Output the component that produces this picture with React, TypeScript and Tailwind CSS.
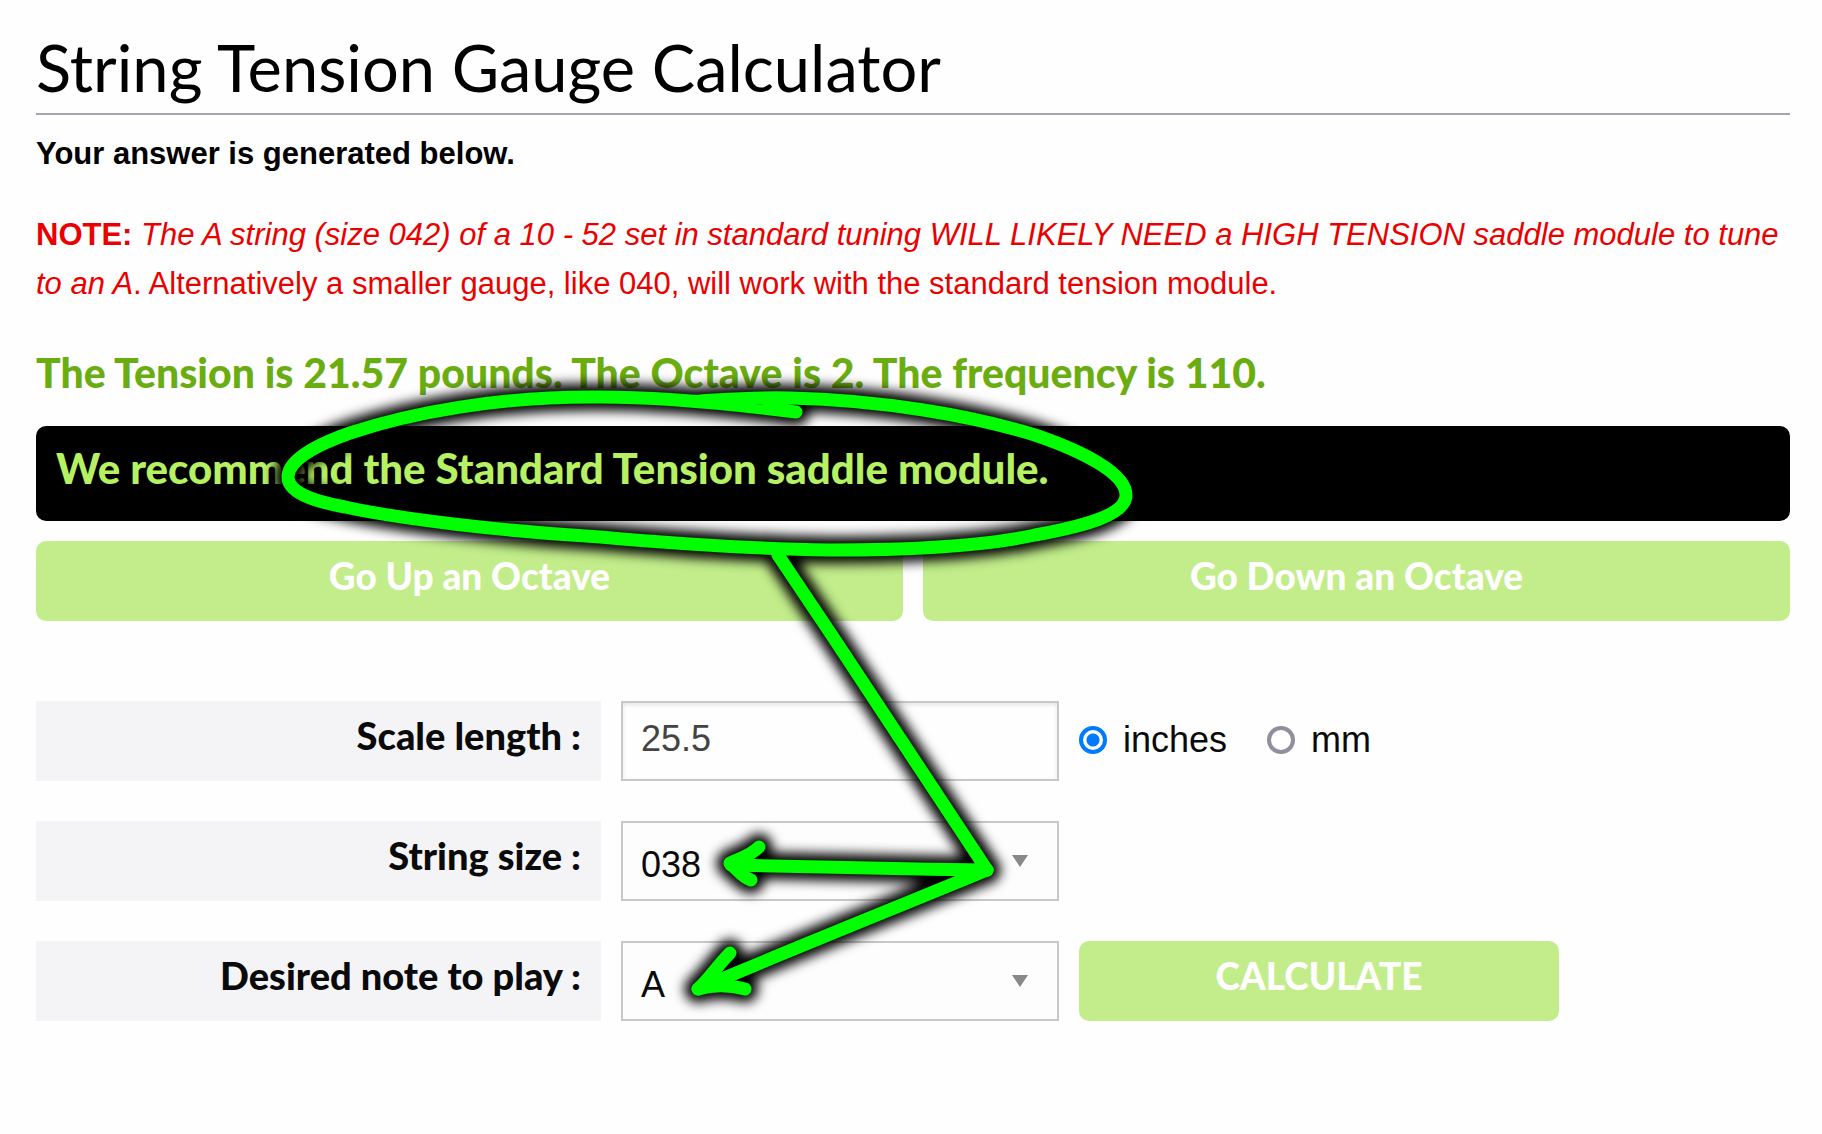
import { useState } from "react";
import type { ReactNode } from "react";

const strokes = [
  "M796 412 C740 405 670 397 600 397 C500 396 410 413 350 433 C310 447 288 462 288 477 C288 492 312 501 345 507 C400 519 500 531 600 537 C680 544 760 549 830 550 C900 550 980 547 1035 535 C1085 526 1126 515 1126 495 C1126 474 1085 452 1035 435 C970 415 880 400 790 398 C750 397 720 400 700 401",
  "M778 555 L835 640 L987 870",
  "M987 870 C900 869 810 867 731 865",
  "M759 847 C750 856 740 858 730 863 C737 869 742 877 751 880",
  "M987 870 C890 910 790 950 698 989",
  "M730 953 C718 965 709 979 698 989 C715 984 730 985 745 989",
];

function Annotation() {
  const paths = strokes.map((d) => <path key={d} d={d} />);
  return (
    <svg
      viewBox="0 0 1822 1134"
      className="pointer-events-none absolute top-0 left-0 h-auto w-full"
      fill="none"
      strokeLinecap="round"
      strokeLinejoin="round"
      aria-hidden="true"
    >
      <defs>
        <filter id="glow" x="-10%" y="-10%" width="120%" height="120%">
          <feGaussianBlur stdDeviation="6" />
        </filter>
      </defs>
      <g stroke="#000" strokeWidth="27" filter="url(#glow)">{paths}</g>
      <g stroke="#00ff00" strokeWidth="13">{paths}</g>
    </svg>
  );
}

function Row({ id, label, children }: { id: string; label: string; children: ReactNode }) {
  return (
    <div className="grid grid-cols-[565fr_438fr_480fr_211fr] gap-5">
      <label
        htmlFor={id}
        className="flex h-20 items-center justify-end bg-[#f4f4f6] pr-5 pb-3 font-['Lato'] text-[38px] leading-10 font-black text-[#0a0a0a]"
      >
        {label}
      </label>
      {children}
    </div>
  );
}

function Dropdown({ id, options, initial }: { id: string; options: string[]; initial: string }) {
  return (
    <div className="relative">
      <select
        id={id}
        defaultValue={initial}
        className="h-20 w-full appearance-none border-2 border-[#c8c8c8] bg-[#fdfdfd] pt-2 pr-16 pl-[18px] text-4xl text-[#0a0a0a]"
      >
        {options.map((o) => (
          <option key={o}>{o}</option>
        ))}
      </select>
      <svg viewBox="0 0 16 12" className="pointer-events-none absolute top-[34px] right-[31px] h-3 w-4" aria-hidden="true">
        <path d="M0 0h16L8 12z" fill="#888" />
      </svg>
    </div>
  );
}

function Unit({ label, checked, onSelect }: { label: string; checked: boolean; onSelect: () => void }) {
  return (
    <label className="flex items-center gap-4 pb-0.5 text-4xl text-[#0a0a0a]">
      <input
        type="radio"
        name="unit"
        checked={checked}
        onChange={onSelect}
        className="size-7 appearance-none rounded-full border-4 border-[#8f8f9d] bg-white checked:border-[#007aff] checked:bg-[radial-gradient(circle,#007aff_6px,white_7px)]"
      />
      {label}
    </label>
  );
}

const button = "h-20 rounded-[10px] bg-[#c2ed8a] pb-2.5 font-['Lato'] text-[37px] leading-10 font-black text-white";

export default function App() {
  const [unit, setUnit] = useState("inches");
  return (
    <main className="relative min-h-screen bg-[#fefefe] pt-[30px] pr-8 pb-[113px] pl-9 font-['Liberation_Sans',sans-serif]">
      <h1 className="border-b-2 border-[#a1a5b0] pb-[9px] font-['Lato'] text-[65px] leading-[74px] text-black">
        String Tension Gauge Calculator
      </h1>
      <p className="mt-3.5 text-[31px] leading-[49px] font-bold text-black">Your answer is generated below.</p>
      <p className="mt-8 text-[31px] leading-[49px] text-[#eb0000]">
        <strong>NOTE:</strong>{" "}
        <em>
          The A string (size 042) of a 10 - 52 set in standard tuning WILL LIKELY NEED a HIGH TENSION saddle module to
          tune to an A
        </em>
        . Alternatively a smaller gauge, like 040, will work with the standard tension module.
      </p>
      <h2 className="mt-[37px] font-['Lato'] text-[41px] leading-[56px] font-black text-[#6aad10]">
        The Tension is 21.57 pounds. The Octave is 2. The frequency is 110.
      </h2>
      <div className="mt-[25px] rounded-[10px] bg-black px-5 pt-3.5 pb-[25px] font-['Lato'] text-[42px] leading-[56px] font-black text-[#b5f162]">
        We recommend the Standard Tension saddle module.
      </div>
      <div className="mt-5 grid grid-cols-2 gap-5">
        <button type="button" className={button}>Go Up an Octave</button>
        <button type="button" className={button}>Go Down an Octave</button>
      </div>
      <form className="mt-20 flex flex-col gap-10" onSubmit={(e) => e.preventDefault()}>
        <Row id="scale" label="Scale length :">
          <input
            id="scale"
            type="text"
            defaultValue="25.5"
            className="h-20 w-full border-2 border-[#c8c8c8] bg-[#fefefe] pb-1 pl-[18px] text-4xl text-[#444] shadow-[inset_0_2px_4px_rgba(0,0,0,0.1)]"
          />
          <div className="flex items-center gap-10">
            <Unit label="inches" checked={unit === "inches"} onSelect={() => setUnit("inches")} />
            <Unit label="mm" checked={unit === "mm"} onSelect={() => setUnit("mm")} />
          </div>
        </Row>
        <Row id="size" label="String size :">
          <Dropdown id="size" initial="038" options={["036", "038", "040", "042"]} />
        </Row>
        <Row id="note" label="Desired note to play :">
          <Dropdown id="note" initial="A" options={["A", "B", "C", "D", "E", "F", "G"]} />
          <button type="submit" className={button}>CALCULATE</button>
        </Row>
      </form>
      <Annotation />
    </main>
  );
}
